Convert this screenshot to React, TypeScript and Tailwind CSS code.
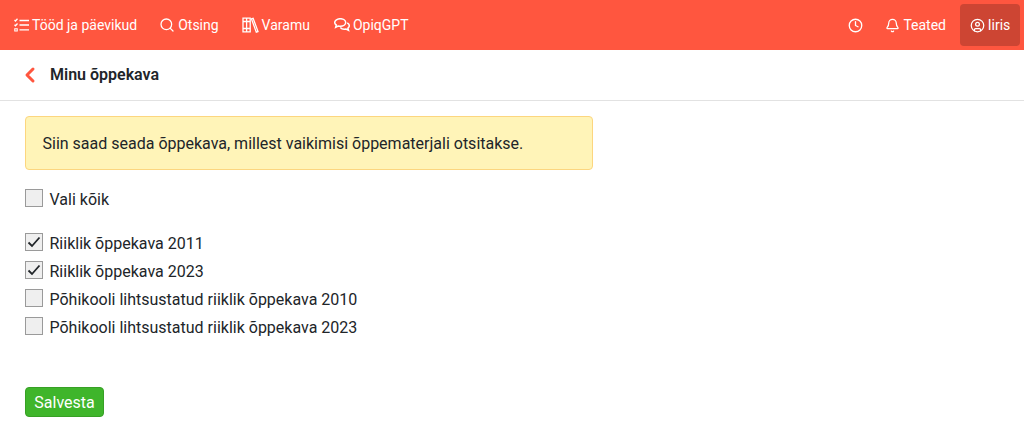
import { Bell, ChevronLeft, CircleUser, Clock, Search } from 'lucide-react';
import type { ReactNode } from 'react';

function TasksIcon() {
  return (
    <svg viewBox="0 0 15 14" className="w-[15px] h-[14px]" fill="none" stroke="currentColor" strokeWidth="1.300">
      <path d="M0.500 2l1 1 2-2.200M0.500 6.700l1 1 2-2.200" />
      <path d="M0.800 10.800h2.400v2.200H0.800z" strokeWidth="1.100" />
      <path d="M5.500 2.500H15M5.500 7H15M5.500 11.800H15" />
    </svg>
  );
}

function BooksIcon() {
  return (
    <svg viewBox="0 0 17 16" className="w-[17px] h-[16px]" fill="none" stroke="currentColor" strokeWidth="1.300">
      <path d="M1 1.200h3.600v13.600H1zM4.600 1.200h3.600v13.600H4.600z" />
      <path d="M1 4.500h7.200M1 11.500h7.200" />
      <path d="M9.400 1.800l1.700-.5 4.900 13.200-1.700.6z" />
    </svg>
  );
}

function ChatIcon() {
  return (
    <svg viewBox="0.500 0.500 16 14" className="w-[16px] h-[14px]" fill="none" stroke="currentColor" strokeWidth="1.500">
      <path d="M6.800 1.200c3 0 5.400 1.600 5.400 3.800S9.800 8.800 6.800 8.800c-.8 0-1.500-.1-2.200-.3L2.200 9.800l.6-2.300C1.700 6.800 1.200 5.900 1.200 5c0-2.200 2.600-3.800 5.600-3.800z" />
      <path d="M13.700 5.300c1.300.7 2.100 1.700 2.100 2.900 0 .9-.5 1.800-1.400 2.500l.6 2.200-2.500-1.300c-2.200.5-4.500-.1-5.700-1.600" />
    </svg>
  );
}

function NavItem({
  icon,
  label,
  active,
  className = '',
}: {
  icon: ReactNode;
  label?: string;
  active?: boolean;
  className?: string;
}) {
  return (
    <a
      href="#"
      className={`flex items-center gap-[3px] h-[42px] rounded text-sm text-white ${
        active ? 'w-[60px] justify-center bg-[#cd4533]' : 'px-[11px]'
      } ${className}`}
    >
      {icon}
      {label && <span>{label}</span>}
    </a>
  );
}

function CheckRow({ label, checked }: { label: string; checked?: boolean }) {
  return (
    <label className="flex items-center gap-[6.500px] h-[28px] text-base text-[#212529]">
      <span className="flex items-center justify-center w-[18px] h-[18px] -translate-y-px border border-[#9a9a9a] bg-[#efefef]">
        {checked && (
          <svg viewBox="0 0 16 16" className="w-[16px] h-[16px]" fill="none" stroke="#212529" strokeWidth="1.800">
            <path d="M2.500 8.500l3.500 3.500 7.500-8.500" />
          </svg>
        )}
      </span>
      <span className="translate-y-px">{label}</span>
    </label>
  );
}

export default function App() {
  return (
    <div className="h-[427px] overflow-hidden bg-white font-['Roboto',sans-serif]">
      <header className="flex items-center justify-between h-[50px] pl-[3px] pr-[4px] bg-[#ff563f]">
        <nav className="flex items-center">
          <NavItem icon={<TasksIcon />} label="Tööd ja päevikud" />
          <NavItem icon={<Search className="w-[16px] h-[16px]" strokeWidth={1.900} />} label="Otsing" />
          <NavItem icon={<BooksIcon />} label="Varamu" className="ml-px" />
          <NavItem icon={<ChatIcon />} label="OpiqGPT" className="ml-[2px]" />
        </nav>
        <nav className="flex items-center">
          <NavItem icon={<Clock className="w-[15px] h-[15px]" strokeWidth={2.100} />} />
          <NavItem icon={<Bell className="w-[15px] h-[15px]" strokeWidth={2} />} label="Teated" />
          <NavItem
            icon={<CircleUser className="w-[15px] h-[15px]" strokeWidth={2} />}
            label="Iiris"
            active
            className="ml-[3px]"
          />
        </nav>
      </header>

      <div className="flex items-center h-[51px] pl-[18px] border-b border-[#e2e2e2]">
        <ChevronLeft className="w-[24px] h-[24px] text-[#ff563f]" strokeWidth={3} />
        <h1 className="ml-[8px] text-base font-semibold text-[#212529]">Minu õppekava</h1>
      </div>

      <main className="px-[25px] pt-[15px]">
        <div className="w-[568px] h-[54px] flex items-center pl-[16.500px] pt-px rounded bg-[#fff4b8] border border-[#fcd67f] text-base text-[#212529]">
          Siin saad seada õppekava, millest vaikimisi õppematerjali otsitakse.
        </div>

        <div className="mt-[15px]">
          <CheckRow label="Vali kõik" />
        </div>

        <div className="mt-[16px]">
          <CheckRow label="Riiklik õppekava 2011" checked />
          <CheckRow label="Riiklik õppekava 2023" checked />
          <CheckRow label="Põhikooli lihtsustatud riiklik õppekava 2010" />
          <CheckRow label="Põhikooli lihtsustatud riiklik õppekava 2023" />
        </div>

        <button className="mt-[46px] h-[30px] w-[79px] pt-px rounded bg-[#3fb52b] border border-[#37a025] text-base text-white">
          Salvesta
        </button>
      </main>
    </div>
  );
}
